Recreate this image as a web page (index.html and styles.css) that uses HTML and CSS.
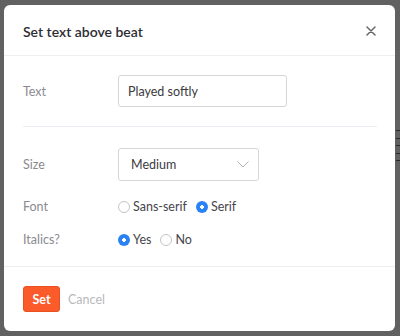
FILE: index.html
```html
<!DOCTYPE html>
<html lang="en">
<head>
    <meta charset="UTF-8">
    <title>Set text above beat</title>
    <link rel="stylesheet" href="styles.css">
</head>
<body>
    <div class="backdrop-lines">
        <span></span><span></span><span></span><span></span><span></span>
    </div>
    <div class="modal">
        <div class="modal-header">
            <h2>Set text above beat</h2>
            <button class="close" aria-label="Close">
                <svg width="10" height="10" viewBox="0 0 10 10"><path d="M1 1L9 9M9 1L1 9" stroke="#666" stroke-width="1.5" stroke-linecap="round"/></svg>
            </button>
        </div>
        <div class="modal-body">
            <div class="row">
                <label class="label">Text</label>
                <input class="text-input" type="text" value="Played softly">
            </div>
            <hr class="divider">
            <div class="row row-size">
                <label class="label">Size</label>
                <div class="select">
                    <span>Medium</span>
                    <svg width="12" height="7" viewBox="0 0 12 7"><path d="M0.5 0.5L6 6L11.5 0.5" fill="none" stroke="#b5b5b5" stroke-width="1"/></svg>
                </div>
            </div>
            <div class="row row-radio">
                <label class="label">Font</label>
                <div class="radios">
                    <span class="radio"><i class="dot"></i>Sans-serif</span>
                    <span class="radio"><i class="dot checked"></i>Serif</span>
                </div>
            </div>
            <div class="row row-radio">
                <label class="label">Italics?</label>
                <div class="radios">
                    <span class="radio"><i class="dot checked"></i>Yes</span>
                    <span class="radio"><i class="dot"></i>No</span>
                </div>
            </div>
        </div>
        <div class="modal-footer">
            <button class="btn-set">Set</button>
            <button class="btn-cancel">Cancel</button>
        </div>
    </div>
</body>
</html>
```
FILE: styles.css
```css
body {
    margin: 0;
    width: 400px;
    height: 336px;
    background-color: #616161;
    font-family: Lato, "Open Sans", sans-serif;
    position: relative;
    overflow: hidden;
    padding: 5px 0 0 4px;
    box-sizing: border-box;
}
.backdrop-lines {
    position: absolute;
    right: 0;
    top: 130px;
    width: 4px;
}
.backdrop-lines span {
    display: block;
    height: 1px;
    margin-bottom: 6.5px;
    background-color: #2a2a2a;
}
.modal {
    width: 391px;
    height: 326px;
    background-color: #fff;
    border-radius: 6px;
    display: flex;
    flex-direction: column;
}
.modal-header {
    height: 50px;
    border-bottom: 1px solid #eeeef1;
    display: flex;
    align-items: center;
    justify-content: space-between;
    padding: 0 19px 0 19px;
}
.modal-header h2 {
    margin: 2px 0 0 0;
    font-size: 14px;
    font-weight: 600;
    color: #2d2d33;
}
.close {
    border: none;
    background: none;
    padding: 0;
    margin: 2px 0 0 0;
    display: flex;
}
.modal-body {
    padding: 19px 18px 0 19px;
    flex: 1;
    border-bottom: 1px solid #eeeef1;
}
.row {
    display: flex;
    align-items: center;
}
.label {
    width: 95px;
    font-size: 12.5px;
    color: #8a8a90;
}
.text-input {
    width: 169px;
    height: 32px;
    box-sizing: border-box;
    border: 1px solid #d6d6da;
    border-radius: 3px;
    padding: 0 9px;
    font-family: inherit;
    font-size: 12.5px;
    color: #3a3a40;
    outline: none;
}
.divider {
    border: none;
    border-top: 1px solid #ececf2;
    margin: 19px 0 21px 0;
}
.select {
    width: 141px;
    height: 33px;
    box-sizing: border-box;
    border: 1px solid #d6d6da;
    border-radius: 3px;
    padding: 0 9px 0 12px;
    display: flex;
    align-items: center;
    justify-content: space-between;
    font-size: 12.5px;
    color: #3a3a40;
}
.row-radio {
    margin-top: 18px;
}
.row-radio + .row-radio {
    margin-top: 18px;
}
.radios {
    display: flex;
    gap: 9px;
}
.radio {
    display: flex;
    align-items: center;
    font-size: 12.5px;
    color: #45454b;
}
.dot {
    width: 12px;
    height: 12px;
    box-sizing: border-box;
    border: 1px solid #c4c4c8;
    border-radius: 50%;
    margin-right: 3px;
    display: inline-block;
}
.dot.checked {
    border: none;
    background: radial-gradient(circle, #fff 0 1.6px, #2a83f4 2px);
}
.modal-footer {
    height: 64px;
    display: flex;
    align-items: center;
    padding: 0 19px;
    gap: 8px;
}
.btn-set {
    width: 37px;
    height: 26px;
    background-color: #fb5a2a;
    border: 1px solid #e8501f;
    border-radius: 3px;
    color: #fff;
    font-family: inherit;
    font-weight: 700;
    font-size: 12.5px;
    padding: 0;
}
.btn-cancel {
    background: none;
    border: none;
    padding: 0;
    font-family: inherit;
    font-size: 12.5px;
    color: #b8b8bc;
}
```
